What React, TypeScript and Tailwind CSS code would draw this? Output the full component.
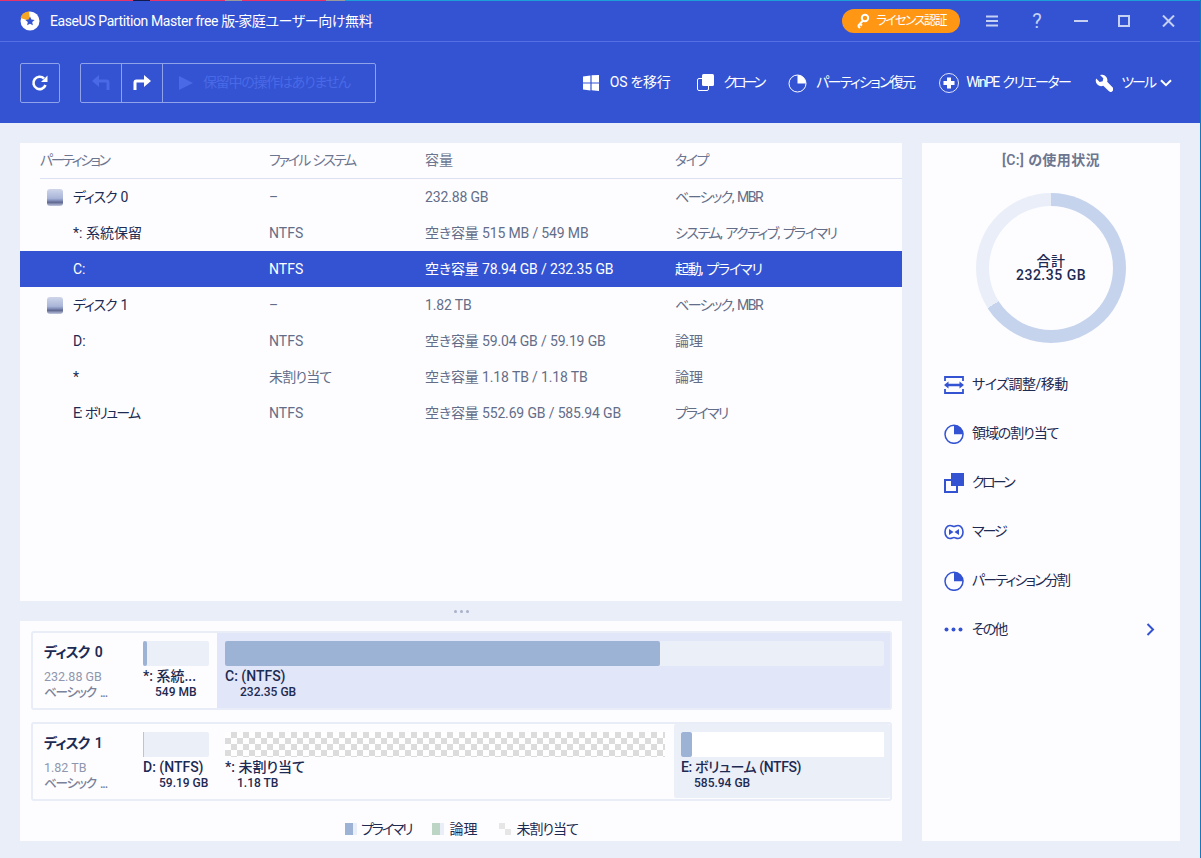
import React from "react";

const FONT = "font-['Roboto','Noto_Sans_CJK_JP',sans-serif] [font-feature-settings:'palt']";

function Logo() {
  return (
    <svg width="20" height="20" viewBox="0 0 20 20">
      <circle cx="10" cy="10" r="9.500" fill="#fff" />
      <path d="M10 10 L.5 7 A9.500 9.500 0 0 1 9 .5 Z" fill="#f5a623" />
      <path d="M10 5.500l1.400 3 3.200.4-2.400 2.200.7 3.200-2.900-1.600-2.900 1.600.7-3.200-2.400-2.200 3.200-.4z" fill="#3353d3" />
    </svg>
  );
}

function Pie({ size = 20, color = "#3353d3" }: { size?: number; color?: string }) {
  return (
    <svg width={size} height={size} viewBox="0 0 20 20">
      <circle cx="10" cy="10.300" r="9" fill="none" stroke={color} strokeWidth="1.500" />
      <path d="M10 1 A9.300 9.300 0 0 1 19.300 10.300 L10 10.300 Z" fill={color} />
    </svg>
  );
}

function WhitePie() {
  return (
    <svg width="19" height="20" viewBox="0 0 19 20">
      <circle cx="9.500" cy="10.500" r="8.500" fill="none" stroke="#fff" strokeWidth="1" />
      <path d="M9.500 2 A8.500 8.500 0 0 1 18 10.500 L9.500 10.500 Z" fill="#fff" />
    </svg>
  );
}

function DiskIcon() {
  return (
    <span className="block h-[17px] w-4 rounded-[3px] bg-[linear-gradient(#cfd6ea_0%,#a9b4d8_55%,#7d88b4_70%,#5d6690_78%,#c3c9e0_100%)]" />
  );
}

function Checker({ className = "" }: { className?: string }) {
  return (
    <div
      className={`bg-[#ffffff] bg-[conic-gradient(#dcdcdc_25%,#ffffff_0_50%,#dcdcdc_0_75%,#ffffff_0)] bg-[length:12px_12px] ${className}`}
    />
  );
}

const CAP = "tracking-[-0.15px]";

const rows = [
  { disk: true, name: "ディスク 0", nt: "tracking-[-1.2px] [word-spacing:2px]", fs: "–", ft: "", cap: "232.88 GB", type: "ベーシック, MBR", tt: "tracking-[-1.5px] [word-spacing:2px]" },
  { name: "*: 系統保留", nt: "", fs: "NTFS", ft: "", cap: "空き容量 515 MB / 549 MB", type: "システム, アクティブ, プライマリ", tt: "tracking-[-1.5px] [word-spacing:2px]" },
  { name: "C:", nt: "", fs: "NTFS", ft: "", cap: "空き容量 78.94 GB / 232.35 GB", type: "起動, プライマリ", tt: "tracking-[-1.2px] [word-spacing:2px]", sel: true },
  { disk: true, name: "ディスク 1", nt: "tracking-[-1.2px] [word-spacing:2px]", fs: "–", ft: "", cap: "1.82 TB", type: "ベーシック, MBR", tt: "tracking-[-1.5px] [word-spacing:2px]" },
  { name: "D:", nt: "", fs: "NTFS", ft: "", cap: "空き容量 59.04 GB / 59.19 GB", type: "論理", tt: "" },
  { name: "*", nt: "", fs: "未割り当て", ft: "tracking-[-0.8px]", cap: "空き容量 1.18 TB / 1.18 TB", type: "論理", tt: "" },
  { name: "E: ボリューム", nt: "tracking-[-1.7px] [word-spacing:2px]", fs: "NTFS", ft: "", cap: "空き容量 552.69 GB / 585.94 GB", type: "プライマリ", tt: "tracking-[-1.8px]" },
];

function ToolItem({ icon, label, gap = "gap-[9px]", track = "" }: { icon: React.ReactNode; label: string; gap?: string; track?: string }) {
  return (
    <div className={`flex items-center ${gap} whitespace-nowrap text-[14px] text-white`}>
      {icon}
      <span className={track}>{label}</span>
    </div>
  );
}

function SideAction({ icon, label, right, track = "" }: { icon: React.ReactNode; label: string; right?: React.ReactNode; track?: string }) {
  return (
    <div className="flex h-[49px] items-center pl-[22px] pr-[25px] text-[14px] text-[#1d2a52]">
      <span className="flex w-[28px] shrink-0 items-center">{icon}</span>
      <span className={`whitespace-nowrap ${track}`}>{label}</span>
      {right && <span className="ml-auto">{right}</span>}
    </div>
  );
}

function Cap({ title, size, indent, className = "", track = "" }: { title: string; size: string; indent: string; className?: string; track?: string }) {
  return (
    <div className={`text-[#1d2a52] ${className}`}>
      <div className={`h-[17px] whitespace-nowrap text-[14px] leading-[17px] font-medium ${track}`}>{title}</div>
      <div className="h-[15px] whitespace-nowrap text-[12px] leading-[15px] font-medium">
        <span className={indent}>{size}</span>
      </div>
    </div>
  );
}

function DiskLabel({ name, size }: { name: string; size: string }) {
  return (
    <div className="w-[110px] shrink-0 pl-[11px] pt-[10px]">
      <div className="h-[18px] text-[14px] font-semibold leading-[18px] tracking-[-1px] [word-spacing:3px] text-[#1d2a52]">{name}</div>
      <div className="mt-[8px] h-4 text-[12.5px] leading-[16px] text-[#8f97ae]">{size}</div>
      <div className="h-[15px] text-[12.5px] leading-[15px] font-medium tracking-[-1.1px] [word-spacing:2px] text-[#7a8299]">ベーシック ...</div>
    </div>
  );
}

export default function App() {
  return (
    <div className={`${FONT} flex h-[858px] w-[1201px] overflow-hidden`}>
      <div className="flex w-[1200px] flex-col bg-[#eaeef8]">
        {/* desktop sliver */}
        <div className="flex h-px shrink-0">
          <div className="w-[133px] bg-[#e8326a]" />
          <div className="w-[17px] bg-[#101850]" />
          <div className="w-[75px] bg-[#e8326a]" />
          <div className="w-[17px] bg-[#9a9a9a]" />
          <div className="w-[84px] bg-[#e8326a]" />
          <div className="w-[19px] bg-[#9a9a9a]" />
          <div className="flex-1 bg-[#1ba1d8]" />
        </div>

        <div className="shrink-0 bg-[#3353d3]">
          {/* Title bar */}
          <div className="flex h-[40px] items-center pl-5 pr-[25px]">
            <Logo />
            <span className="ml-[10px] whitespace-nowrap text-[14px] tracking-[-0.4px] text-white">EaseUS Partition Master free 版-家庭ユーザー向け無料</span>
            <div className="ml-auto flex h-6 w-[118px] items-center justify-center gap-[6px] rounded-full bg-[#ff9614] text-[12.5px] text-white">
              <svg width="14" height="16" viewBox="0 0 14 16" fill="none">
                <circle cx="9" cy="5" r="3.200" stroke="#fff" strokeWidth="2" />
                <path d="M7 7.500 L2 13 M2 13l2 2 M4 11l2 1.600" stroke="#fff" strokeWidth="2" />
              </svg>
              <span className="whitespace-nowrap tracking-[-1.6px]">ライセンス認証</span>
            </div>
            <svg className="ml-[26px]" width="12" height="12" viewBox="0 0 12 12">
              <path d="M0 1.500h12M0 6h12M0 10.500h12" stroke="#c6d0f3" strokeWidth="2" />
            </svg>
            <span className="ml-[33px] w-[12px] text-center text-[20px] leading-none text-[#c6d0f3]">?</span>
            <svg className="ml-[31px]" width="14" height="2" viewBox="0 0 14 2">
              <path d="M0 1h14" stroke="#c6d0f3" strokeWidth="2" />
            </svg>
            <svg className="ml-[30px]" width="12" height="12" viewBox="0 0 12 12" fill="none">
              <rect x="1" y="1" width="10" height="10" stroke="#c6d0f3" strokeWidth="2" />
            </svg>
            <svg className="ml-[32px]" width="13" height="12" viewBox="0 0 13 12">
              <path d="M1 .5l11 11M12 .5l-11 11" stroke="#c6d0f3" strokeWidth="2" />
            </svg>
          </div>
          <div className="h-px bg-[#5470e4]" />
          {/* Toolbar */}
          <div className="flex h-[81px] items-center pl-5 pr-[28px]">
            <div className="flex h-10 w-10 items-center justify-center rounded-[2px] border border-[#8fa2ea]">
              <svg width="18" height="18" viewBox="0 0 18 18" fill="none">
                <path d="M14.500 11 A6.200 6.200 0 1 1 13 4.500" stroke="#fff" strokeWidth="2.600" />
                <path d="M16.500 1.500v6.500h-6.500z" fill="#fff" />
              </svg>
            </div>
            <div className="ml-5 flex h-10 w-[296px] items-center rounded-[2px] border border-[#8fa2ea]">
              <div className="flex h-full w-[41px] items-center justify-center border-r border-[#8fa2ea]">
                <svg width="18" height="16" viewBox="0 0 18 16" fill="none">
                  <path d="M16 15V7.500a1.500 1.500 0 0 0-1.500-1.500H5" stroke="#4a69e6" strokeWidth="3" />
                  <path d="M7 0L0 6l7 6z" fill="#4a69e6" />
                </svg>
              </div>
              <div className="flex h-full w-[41px] items-center justify-center border-r border-[#8fa2ea]">
                <svg width="18" height="16" viewBox="0 0 18 16" fill="none">
                  <path d="M2 15V7.500A1.500 1.500 0 0 1 3.500 6H13" stroke="#fff" strokeWidth="3" />
                  <path d="M11 0l7 6-7 6z" fill="#fff" />
                </svg>
              </div>
              <div className="flex items-center pl-[16px]">
                <svg width="14" height="16" viewBox="0 0 14 16">
                  <path d="M0 1l14 7-14 7z" fill="#4a69e6" />
                </svg>
                <span className="ml-[10px] whitespace-nowrap text-[14px] tracking-[-1.25px] text-[#4a69e6]">保留中の操作はありません</span>
              </div>
            </div>
            <div className="ml-auto flex items-center gap-[25px]">
              <ToolItem
                gap="gap-[11px]"
                track="mr-[2px] tracking-[-0.3px]"
                icon={
                  <svg width="16" height="16" viewBox="0 0 16 16">
                    <path d="M0 1.500l7.400-1v7H0zM8.600.3L16 0v7.500H8.600zM0 8.500h7.400v7L0 14.500zM8.600 8.500H16V16l-7.400-.7z" fill="#fff" />
                  </svg>
                }
                label="OS を移行"
              />
              <ToolItem
                track="tracking-[-3px]"
                icon={
                  <svg width="17" height="17" viewBox="0 0 17 17" fill="none">
                    <rect x=".5" y="4.500" width="11" height="12" rx="1.500" stroke="#fff" />
                    <rect x="5" y="0" width="12" height="12" rx="1.500" fill="#fff" />
                  </svg>
                }
                label="クローン"
              />
              <ToolItem track="tracking-[-1.7px]" icon={<WhitePie />} label="パーティション復元" />
              <ToolItem
                gap="gap-[7px]"
                track="tracking-[-1.6px] [word-spacing:2px]"
                icon={
                  <svg width="20" height="20" viewBox="0 0 20 20" fill="none">
                    <circle cx="10" cy="10" r="9.500" stroke="#dfe5fa" />
                    <path d="M8 4.500h4V8h3.500v4H12v3.500H8V12H4.500V8H8z" fill="#fff" />
                  </svg>
                }
                label="WinPE クリエーター"
              />
              <div className="flex items-center whitespace-nowrap text-[14px] text-white">
                <svg width="18" height="18" viewBox="0 0 18 18">
                  <path d="M7.500.8a5.500 5.500 0 0 1 4.700 7l5.300 5.400a2.500 2.500 0 0 1-3.800 3.900L8.300 11.700A5.500 5.500 0 0 1 1.200 4.500l3.500 3.400 3-.6.600-3L5 1.100A5.500 5.500 0 0 1 7.500.8z" fill="#fff" />
                </svg>
                <span className="ml-[8px] tracking-[-2px]">ツール</span>
                <svg className="ml-[5px]" width="12" height="8" viewBox="0 0 12 8" fill="none">
                  <path d="M1 1.200l5 5 5-5" stroke="#fff" strokeWidth="2" />
                </svg>
              </div>
            </div>
          </div>
        </div>

        {/* Content */}
        <div className="flex min-h-0 flex-1 gap-5 pb-[17px] pl-5 pr-5 pt-5">
          <div className="flex w-[882px] flex-col">
            {/* Table */}
            <div className="h-[458px] bg-[#fdfdff]">
              <div className="ml-5 grid h-9 grid-cols-[229px_156px_250px_1fr] items-center border-b border-[#dbe1f3] text-[14px] text-[#6d7690]">
                <span className="tracking-[-2.4px]">パーティション</span>
                <span className="tracking-[-2.1px] [word-spacing:2px]">ファイル システム</span>
                <span>容量</span>
                <span className="tracking-[-1.5px]">タイプ</span>
              </div>
              {rows.map((r) => (
                <div
                  key={r.name}
                  className={`grid h-9 grid-cols-[229px_156px_250px_1fr] items-center pl-5 text-[14px] ${r.sel ? "bg-[#3353d3] text-white" : "text-[#646d88]"}`}
                >
                  <div className={`flex items-center ${r.disk ? "" : "pl-[33px]"} ${r.sel ? "" : "text-[#1d2a52]"}`}>
                    {r.disk && (
                      <span className="ml-[7px] mr-[10px]">
                        <DiskIcon />
                      </span>
                    )}
                    <span className={r.nt}>{r.name}</span>
                  </div>
                  <span className={r.ft}>{r.fs}</span>
                  <span className={CAP}>{r.cap}</span>
                  <span className={r.tt}>{r.type}</span>
                </div>
              ))}
            </div>
            {/* Splitter */}
            <div className="flex h-5 items-center justify-center gap-[3px]">
              <span className="h-[3px] w-[3px] rounded-full bg-[#a9b1c8]" />
              <span className="h-[3px] w-[3px] rounded-full bg-[#a9b1c8]" />
              <span className="h-[3px] w-[3px] rounded-full bg-[#a9b1c8]" />
            </div>
            {/* Disk map */}
            <div className="flex flex-1 flex-col bg-[#fdfdff] pl-[11px] pr-[10px] pt-[10px]">
              <div className="flex h-[79px] rounded-[3px] border-2 border-[#e9edf8]">
                <DiskLabel name="ディスク 0" size="232.88 GB" />
                <div className="w-[74px] shrink-0 pt-2">
                  <div className="h-[25px] w-[66px] rounded-[2px] bg-[#ebeff8]">
                    <div className="h-full w-1 rounded-[2px] bg-[#9db3d6]" />
                  </div>
                  <Cap className="mt-[2px]" title="*: 系統..." size="549 MB" indent="pl-3" />
                </div>
                <div className="flex-1 bg-[#e1e6f8] pl-2 pr-[6px] pt-2">
                  <div className="h-[25px] rounded-[2px] bg-[#ebeff8]">
                    <div className="h-full w-[435px] rounded-[2px] bg-[#9db3d6]" />
                  </div>
                  <Cap className="mt-[2px]" title="C: (NTFS)" size="232.35 GB" indent="pl-[15px]" />
                </div>
              </div>
              <div className="mt-3 flex h-[79px] rounded-[3px] border-2 border-[#e9edf8]">
                <DiskLabel name="ディスク 1" size="1.82 TB" />
                <div className="w-[82px] shrink-0 pt-2">
                  <div className="h-[25px] w-[66px] rounded-[2px] bg-[#ebeff8]">
                    <div className="h-full w-px bg-[#b9c6cf]" />
                  </div>
                  <Cap className="mt-[2px]" title="D: (NTFS)" size="59.19 GB" indent="pl-4" />
                </div>
                <div className="w-[449px] shrink-0 pt-2">
                  <Checker className="h-[25px] w-[440px]" />
                  <Cap className="mt-[2px]" title="*: 未割り当て" size="1.18 TB" indent="pl-3" />
                </div>
                <div className="mb-[1px] flex-1 rounded-[2px] bg-[#ebeff8] pl-[7px] pr-[6px] pt-2">
                  <div className="h-[25px] bg-[#ffffff]">
                    <div className="h-full w-[11px] rounded-[2px] bg-[#9db3d6]" />
                  </div>
                  <Cap className="mt-[2px]" track="tracking-[-0.4px]" title="E: ボリューム (NTFS)" size="585.94 GB" indent="pl-[13px]" />
                </div>
              </div>
              {/* Legend */}
              <div className="flex flex-1 items-center justify-center pt-[16px] text-[14px] text-[#1d2a52]">
                <span className="flex h-3 w-3">
                  <span className="h-full w-2 bg-[#9db3d6]" />
                  <span className="h-full w-1 bg-[#e9eef8]" />
                </span>
                <span className="ml-1 tracking-[-2.2px]">プライマリ</span>
                <span className="ml-[21px] flex h-3 w-3">
                  <span className="h-full w-2 bg-[#bdd5c5]" />
                  <span className="h-full w-1 bg-[#e9eef8]" />
                </span>
                <span className="ml-[5px]">論理</span>
                <span className="ml-[22px] grid h-3 w-3 grid-cols-2">
                  <span className="bg-[#e6e6e6]" />
                  <span />
                  <span />
                  <span className="bg-[#e6e6e6]" />
                </span>
                <span className="ml-[5px] tracking-[-1px]">未割り当て</span>
              </div>
            </div>
          </div>

          {/* Sidebar */}
          <div className="w-[258px] bg-[#fdfdff]">
            <div className="pt-[8px] text-center text-[14px] leading-[18px] font-semibold tracking-[0.4px] text-[#6d7690]">[C:] の使用状況</div>
            <div className="mx-auto mt-[24px] flex justify-center">
              <div className="flex h-[150px] w-[150px] items-center justify-center rounded-full bg-[conic-gradient(#c5d3ed_0_66%,#e9eef8_66%_100%)]">
                <div className="flex h-[124px] w-[124px] flex-col items-center justify-center rounded-full bg-[#fdfdff] text-[14px] leading-[14px] font-medium tracking-[0.5px] text-[#1d2a52]">
                  <span>合計</span>
                  <span>232.35 GB</span>
                </div>
              </div>
            </div>
            <div className="mt-[17px]">
              <SideAction
                label="サイズ調整/移動"
                track="tracking-[-0.5px]"
                icon={
                  <svg width="20" height="18" viewBox="0 0 20 18" fill="none">
                    <path d="M1 5V1h18v4M1 13v4h18v-4" stroke="#3353d3" strokeWidth="1.800" />
                    <path d="M0 9l4.500-3.500v2.300h11V5.500L20 9l-4.500 3.500v-2.300h-11v2.300z" fill="#3353d3" />
                  </svg>
                }
              />
              <SideAction label="領域の割り当て" track="tracking-[-1.1px]" icon={<Pie />} />
              <SideAction
                label="クローン"
                track="tracking-[-2.7px]"
                icon={
                  <svg width="20" height="20" viewBox="0 0 20 20" fill="none">
                    <rect x="1" y="7" width="12" height="12" stroke="#3353d3" strokeWidth="2" />
                    <rect x="7" y="0" width="13" height="13" fill="#3353d3" />
                  </svg>
                }
              />
              <SideAction
                label="マージ"
                track="tracking-[-2px]"
                icon={
                  <svg width="20" height="16" viewBox="0 0 20 16" fill="none">
                    <path d="M6 1.500C8 1.500 8.500 2.500 10 2.500S12 1.500 14 1.500C17 1.500 19 4.500 19 8S17 14.500 14 14.500C12 14.500 11.500 13.500 10 13.500S8 14.500 6 14.500C3 14.500 1 11.500 1 8S3 1.500 6 1.500Z" stroke="#3353d3" strokeWidth="1.600" />
                    <path d="M5 5l4.500 3L5 11zM15 5l-4.500 3 4.500 3z" fill="#3353d3" />
                  </svg>
                }
              />
              <SideAction label="パーティション分割" track="tracking-[-1.8px]" icon={<Pie />} />
              <SideAction
                label="その他"
                track="tracking-[-2px]"
                icon={
                  <svg width="19" height="5" viewBox="0 0 19 5">
                    <circle cx="2.500" cy="2.500" r="2" fill="#3353d3" />
                    <circle cx="9.500" cy="2.500" r="2" fill="#3353d3" />
                    <circle cx="16.500" cy="2.500" r="2" fill="#3353d3" />
                  </svg>
                }
                right={
                  <svg width="9" height="13" viewBox="0 0 9 13" fill="none">
                    <path d="M1.500 1l5.500 5.500L1.500 12" stroke="#3353d3" strokeWidth="2" />
                  </svg>
                }
              />
            </div>
          </div>
        </div>
      </div>
      <div className="w-px shrink-0 bg-[#1577c2]" />
    </div>
  );
}
